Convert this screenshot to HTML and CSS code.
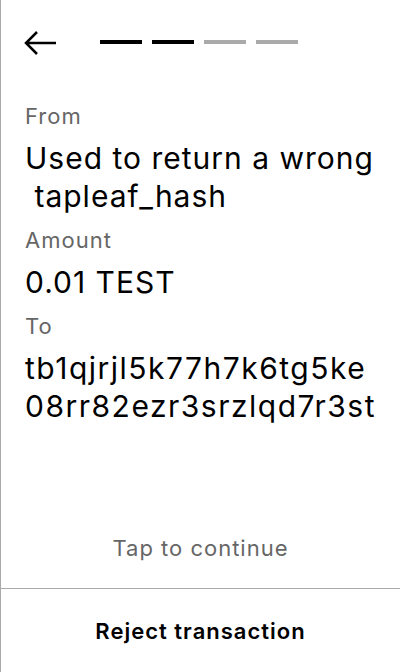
FILE: index.html
```html
<!DOCTYPE html>
<html>
<head>
<meta charset="utf-8">
<link rel="stylesheet" href="styles.css">
</head>
<body>
<div class="screen">
  <div class="header">
    <svg class="back" width="34" height="28" viewBox="0 0 34 28">
      <path d="M33 14H3M14 3L3 14L14 25" fill="none" stroke="#000" stroke-width="2.5"/>
    </svg>
    <div class="steps">
      <span class="step on"></span>
      <span class="step on"></span>
      <span class="step"></span>
      <span class="step"></span>
    </div>
  </div>
  <div class="content">
    <div class="label">From</div>
    <div class="value">Used to return a wrong<br>&nbsp;tapleaf_hash</div>
    <div class="label">Amount</div>
    <div class="value">0.01 TEST</div>
    <div class="label">To</div>
    <div class="value addr">tb1qjrjl5k77h7k6tg5ke08rr82ezr3srzlqd7r3st</div>
  </div>
  <div class="tap">Tap to continue</div>
  <div class="footer">Reject transaction</div>
</div>
</body>
</html>
```
FILE: styles.css
```css
html, body {
  margin: 0;
  padding: 0;
  background: #fff;
}
body {
  font-family: Inter, "Noto Sans", sans-serif;
  color: #000;
  letter-spacing: 1px;
}
.screen {
  box-sizing: border-box;
  width: 400px;
  height: 672px;
  border-left: 1px solid #aaa;
  display: flex;
  flex-direction: column;
}
.header {
  display: flex;
  align-items: center;
  height: 28px;
  margin-top: 29px;
  padding-left: 22px;
}
.back {
  display: block;
}
.steps {
  display: flex;
  gap: 10px;
  margin-left: 43px;
  margin-top: -2px;
}
.step {
  width: 42px;
  height: 4px;
  background: #aaa;
}
.step.on {
  background: #000;
}
.content {
  padding: 0 20px 0 24px;
  margin-top: 47px;
}
.label {
  font-size: 22px;
  line-height: 24px;
  color: #666;
}
.value {
  font-size: 30px;
  line-height: 38px;
  margin-top: 11px;
  margin-bottom: 13px;
}
.addr {
  word-break: break-all;
  letter-spacing: 1.5px;
}
.tap {
  margin-top: auto;
  text-align: center;
  font-size: 22px;
  color: #666;
  line-height: 24px;
  padding-bottom: 28px;
}
.footer {
  border-top: 1px solid #aaa;
  height: 83px;
  display: flex;
  align-items: center;
  justify-content: center;
  font-size: 22px;
  font-weight: 600;
}
```
